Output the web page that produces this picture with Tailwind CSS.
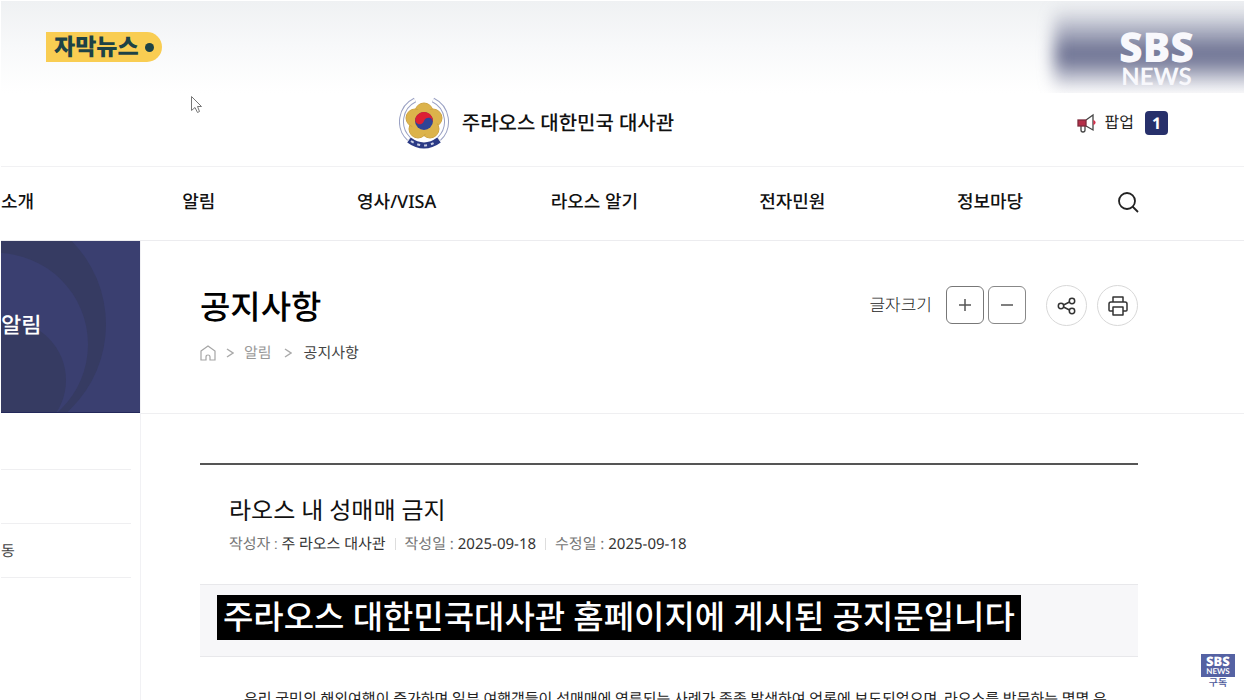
<!DOCTYPE html>
<html lang="ko">
<head>
  <meta charset="UTF-8">
  <meta name="viewport" content="width=device-width, initial-scale=1">
  <title>공지사항 | 주라오스 대한민국 대사관</title>
  <script src="https://cdn.jsdelivr.net/npm/@tailwindcss/browser@4"></script>
</head>
<body class="bg-white text-[#222] font-['Roboto','Noto_Sans_CJK_KR',sans-serif] [text-rendering:geometricPrecision]">
  <div class="relative h-screen overflow-hidden pl-px pr-[11px] flex flex-col">

    <!-- Blurred strip behind the channel logo -->
    <div class="absolute top-px left-px right-[11px] h-[92px] overflow-hidden bg-linear-to-b from-[#eff1f3] via-[#f8f9fa] via-50% to-white" aria-hidden="true">
      <div class="absolute -right-10 top-[6px] w-[230px] h-[84px] bg-linear-to-b from-[#6a6f8d]/0 via-[#62678a] via-58% to-[#6a6f8d]/0 blur-[8px]"></div>
    </div>

    <!-- Header -->
    <header class="relative shrink-0 h-[167px] pt-[80px] pl-[32%] pr-[76px] flex items-center justify-between border-b border-[#f1f1f3]">
      <a href="#" class="flex items-center gap-[11px]">
        <svg class="w-[52px] h-[52px]" viewBox="0 0 52 52" aria-hidden="true">
          <path d="M16 3A24 24 0 0 0 10 42M34 3A24 24 0 0 1 40 42" fill="none" stroke="#9aa1c3" stroke-width="5"/>
          <path d="M16 3A24 24 0 0 0 10 42M34 3A24 24 0 0 1 40 42" fill="none" stroke="#fff" stroke-width="3"/>
          <g fill="#dcb34b" stroke="#cfa440" stroke-width="1">
            <circle cx="25" cy="15" r="9"/>
            <circle cx="34" cy="21" r="9"/>
            <circle cx="31" cy="32" r="9"/>
            <circle cx="19" cy="32" r="9"/>
            <circle cx="16" cy="21" r="9"/>
          </g>
          <circle cx="25" cy="24" r="13" fill="#dcb34b"/>
          <circle cx="25" cy="24" r="9" fill="#2f4496"/>
          <path d="M16 24A9 9 0 0 1 34 24A4.500 4.500 0 0 0 25 24A4.500 4.500 0 0 1 16 24Z" fill="#dc1f33" transform="rotate(15 25 24)"/>
          <path d="M10 43Q25 54 40 43" fill="none" stroke="#2b3a85" stroke-width="6"/>
          <path d="M12 44Q25 53 38 44" fill="none" stroke="#c9cee4" stroke-width="2" stroke-dasharray="3 4"/>
        </svg>
        <span class="text-xl leading-8 font-medium text-[#111]">주라오스 대한민국 대사관</span>
      </a>
      <a href="#" class="flex items-center gap-2">
        <svg class="w-5 h-5" viewBox="0 0 20 20" fill="none" stroke="#444" stroke-width="1.300" aria-hidden="true">
          <path d="M9 7L16 2V17L9 13" fill="#fff"/>
          <path d="M4 13V17Q4 19 6 19Q8 19 8 17V13" fill="#fff"/>
          <rect x="1" y="7" width="8" height="6" fill="#b52f49" stroke="#7d2c3c"/>
          <path d="M17 8Q19 9.500 17 11Z" fill="#d6304c" stroke="#d6304c"/>
        </svg>
        <span class="text-base leading-6">팝업</span>
        <span class="ml-[3px] w-[23px] h-6 rounded bg-[#27306b] text-white text-base leading-6 font-bold font-['Noto_Sans',sans-serif] flex items-center justify-center">1</span>
      </a>
    </header>

    <!-- Main menu -->
    <nav class="relative shrink-0 h-[74px] flex items-center border-b border-[#ececef] text-lg leading-6 font-medium text-center text-[#111] pb-1 font-['Noto_Sans','Noto_Sans_CJK_KR',sans-serif]">
      <a href="#" class="flex-1 text-left">소개</a>
      <a href="#" class="flex-2">알림</a>
      <a href="#" class="flex-2">영사/VISA</a>
      <a href="#" class="flex-2">라오스 알기</a>
      <a href="#" class="flex-2">전자민원</a>
      <a href="#" class="flex-2">정보마당</a>
      <div class="w-[155px] pl-[27px]">
        <button type="button" class="block" aria-label="검색">
          <svg class="w-6 h-6" viewBox="0 0 24 24" fill="none" stroke="#222" stroke-width="1.800">
            <circle cx="11" cy="11" r="8"/>
            <path d="M16.500 16.500L22 22"/>
          </svg>
        </button>
      </div>
    </nav>

    <div class="grow flex min-h-0">
      <!-- Side menu -->
      <aside class="w-[139px] shrink-0">
        <div class="relative h-[172px] bg-[#3a3f70] flex items-center overflow-hidden border-b border-[#23285a]">
          <svg class="absolute inset-0 w-full h-full" viewBox="0 0 139 172" preserveAspectRatio="none" aria-hidden="true">
            <circle cx="-15" cy="84" r="120" fill="#363b62"/>
            <circle cx="-5" cy="104" r="92" fill="#3a3f70"/>
            <circle cx="5" cy="140" r="60" fill="#363b62"/>
          </svg>
          <h2 class="relative text-[22px] leading-8 font-medium text-white">알림</h2>
        </div>
        <ul class="mr-[9px] pt-[3px] text-[15px] text-[#444]">
          <li class="h-[54px] border-b border-[#efeff1]"></li>
          <li class="h-[54px] border-b border-[#efeff1]"></li>
          <li class="h-[54px] pt-0.5 border-b border-[#efeff1] flex items-center"><a href="#">동</a></li>
        </ul>
      </aside>

      <main class="grow min-w-0 border-l border-[#f1f1f4]">
        <!-- Page title -->
        <section class="h-[173px] pl-[59px] pr-[106px] pt-11 border-b border-[#efeff1] flex justify-between items-start">
          <div>
            <h1 class="pt-1 text-[33px] leading-10 font-medium text-black">공지사항</h1>
            <ol class="mt-3.5 flex items-center text-[15px] leading-5 text-[#999]">
              <li>
                <a href="#" aria-label="홈">
                  <svg class="w-4 h-4" viewBox="0 0 16 16" fill="none" stroke="#a5a5a5" stroke-width="1.200">
                    <path d="M1 6L8 1L15 6V15H10V12Q10 10 8 10Q6 10 6 12V15H1Z"/>
                  </svg>
                </a>
              </li>
              <li class="mx-2.5"><svg class="w-2 h-3" viewBox="0 0 8 12" fill="none" stroke="#aaa" stroke-width="1.500"><path d="M1 2L7 6L1 10"/></svg></li>
              <li><a href="#">알림</a></li>
              <li class="mx-3"><svg class="w-2 h-3" viewBox="0 0 8 12" fill="none" stroke="#aaa" stroke-width="1.500"><path d="M1 2L7 6L1 10"/></svg></li>
              <li class="text-[#444]">공지사항</li>
            </ol>
          </div>
          <div class="flex items-center">
            <span class="mr-3.5 text-[17px] leading-6 font-light">글자크기</span>
            <button type="button" aria-label="글자 확대" class="w-[38px] h-[38px] mr-1 mb-0.5 rounded-md border border-[#777] flex items-center justify-center">
              <svg class="w-4 h-4" viewBox="0 0 16 16" stroke="#555" stroke-width="1.500"><path d="M2 8H14M8 2V14"/></svg>
            </button>
            <button type="button" aria-label="글자 축소" class="w-[38px] h-[38px] mr-5 mb-0.5 rounded-md border border-[#888] flex items-center justify-center">
              <svg class="w-4 h-4" viewBox="0 0 16 16" stroke="#555" stroke-width="1.500"><path d="M2 8H14"/></svg>
            </button>
            <button type="button" aria-label="공유" class="w-[41px] h-[41px] mr-2.5 rounded-full border border-[#d8d8d8] flex items-center justify-center">
              <svg class="w-5 h-5" viewBox="0 0 20 20" fill="none" stroke="#333" stroke-width="1.500">
                <circle cx="4" cy="10" r="2.700"/>
                <circle cx="15" cy="5" r="2.700"/>
                <circle cx="15" cy="15" r="2.700"/>
                <path d="M6.500 9L12.500 6M6.500 11L12.500 14"/>
              </svg>
            </button>
            <button type="button" aria-label="인쇄" class="w-[41px] h-[41px] rounded-full border border-[#d8d8d8] flex items-center justify-center">
              <svg class="w-[22px] h-[22px]" viewBox="0 0 22 22" fill="none" stroke="#333" stroke-width="1.500" stroke-linejoin="round">
                <path d="M6 7V2H16V7M6 16H3Q2 16 2 15V9Q2 7 4 7H18Q20 7 20 9V15Q20 16 19 16H16"/>
                <path d="M6 12H16V20H6Z"/>
              </svg>
            </button>
          </div>
        </section>

        <!-- Notice -->
        <article class="mt-[49px] ml-[59px] mr-[106px] border-t-2 border-[#555]">
          <header class="h-[119px] pt-[30px] pl-[29px]">
            <h2 class="text-2xl leading-8 text-[#111]">라오스 내 성매매 금지</h2>
            <p class="mt-[7px] flex items-center text-[15px] leading-5 text-[#333]">
              <span><span class="text-[#777]">작성자 :</span> 주 라오스 대사관</span>
              <span class="mx-[9px] w-px h-3 bg-[#ddd]"></span>
              <span class="font-['Noto_Sans','Noto_Sans_CJK_KR',sans-serif]"><span class="text-[#777]">작성일 :</span> 2025-09-18</span>
              <span class="mx-[9px] w-px h-3 bg-[#ddd]"></span>
              <span class="font-['Noto_Sans','Noto_Sans_CJK_KR',sans-serif]"><span class="text-[#777]">수정일 :</span> 2025-09-18</span>
            </p>
          </header>
          <div class="h-[73px] pt-2.5 pl-[17px] bg-[#f7f7f9] border-y border-[#e8e8eb]">
            <p class="inline-block h-[45px] pt-[3px] px-1.5 bg-black text-white text-[33px] leading-[42px] font-medium whitespace-nowrap">주라오스 대한민국대사관 홈페이지에 게시된 공지문입니다</p>
          </div>
          <p class="mt-[30px] pl-11 text-[15px] leading-6 whitespace-nowrap">우리 국민의 해외여행이 증가하며 일부 여행객들이 성매매에 연루되는 사례가 종종 발생하여 언론에 보도되었으며, 라오스를 방문하는 몇몇 우</p>
        </article>
      </main>
    </div>

    <!-- Broadcast overlays -->
    <div class="absolute left-[46px] top-8 h-[30px] pl-2 pr-2 flex items-center gap-1.5 rounded-r-full bg-[#f9cd52] text-[#1d4246]">
      <span class="pt-0.5 text-[23px] leading-7 font-black">자막뉴스</span>
      <span class="w-[9px] h-[9px] rounded-full bg-[#1d4246]"></span>
    </div>

    <svg class="absolute left-[190px] top-[95px] w-3 h-[19px]" viewBox="0 0 12 19" fill="#fff" stroke="#777" stroke-width="1" aria-hidden="true">
      <path d="M1.500 1.500V15.500L5 12.500L7.500 17.500L9.500 16.500L7.500 11.500H11.500Z"/>
    </svg>

    <div class="absolute right-[62px] top-7 w-[73px] text-center text-[#f8f8fc]">
      <div class="text-[41px] leading-[39px] font-black font-['Noto_Sans',sans-serif] flex justify-center">SBS</div>
      <div class="text-2xl leading-5 font-bold font-['Lato',sans-serif] flex justify-center">NEWS</div>
    </div>

    <a href="#" class="absolute right-5 bottom-[10px] w-[34px] text-center text-[#4b5799]">
      <span class="block h-[23px] pt-0.5 bg-[#5562a3] text-white">
        <span class="block text-[13px] leading-[11px] font-black font-['Noto_Sans',sans-serif]">SBS</span>
        <span class="block text-[8px] leading-2 font-bold font-['Lato',sans-serif]">NEWS</span>
      </span>
      <span class="block pt-px text-[10px] leading-3 font-medium">구독</span>
    </a>
  </div>
</body>
</html>
